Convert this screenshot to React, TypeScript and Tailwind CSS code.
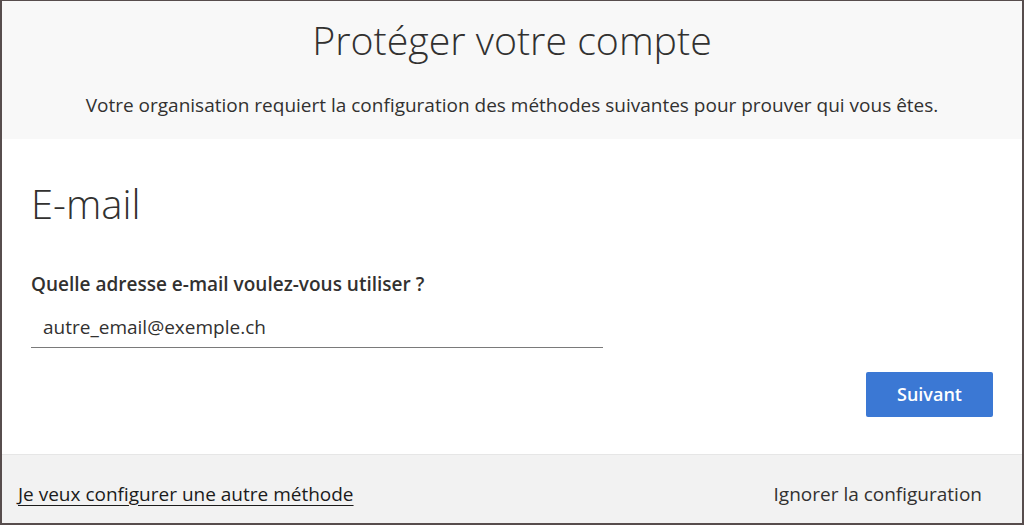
export default function App() {
  return (
    <div
      className="w-[1024px] h-[525px] flex flex-col overflow-hidden border-2 border-t border-[#574d4d] bg-white text-[#262626]"
      style={{ fontFamily: '"Open Sans", "Noto Sans", sans-serif' }}
    >
      <header className="h-[138px] shrink-0 bg-[#f8f8f8] flex flex-col items-center">
        <h1 className="mt-[14px] text-[39.3px] leading-[50px] font-light text-[#323130]">
          Protéger votre compte
        </h1>
        <p className="mt-[27px] text-[19px] leading-[26px] text-[#323130]">
          Votre organisation requiert la configuration des méthodes suivantes pour prouver qui vous êtes.
        </p>
      </header>

      <main className="flex-1 px-[29px] flex flex-col">
        <h2 className="mt-[41px] text-[40px] leading-[48px] font-light text-[#323130]">E-mail</h2>
        <label className="mt-[43px] text-[19px] leading-[26px] font-semibold text-[#323130]">
          Quelle adresse e-mail voulez-vous utiliser ?
        </label>
        <div className="mt-[17px] w-[572px] border-b border-[#7a7a7a] pl-[12px] pb-[7px]">
          <span className="block text-[19px] leading-[26px] text-[#323130]">autre_email@exemple.ch</span>
        </div>
        <div className="mt-[24px] flex justify-end">
          <button className="w-[127px] h-[45px] rounded-[2px] bg-[#3b78d4] text-white text-[18px] font-semibold">
            Suivant
          </button>
        </div>
      </main>

      <footer className="h-[69px] shrink-0 bg-[#f2f2f2] border-t border-[#e6e6e6] flex items-center justify-between pt-[9px] pl-[16px] pr-[40px]">
        <a className="text-[19px] leading-[26px] underline underline-offset-[4px] text-[#1b1b1b]">
          Je veux configurer une autre méthode
        </a>
        <span className="text-[19px] leading-[26px] text-[#323130]">Ignorer la configuration</span>
      </footer>
    </div>
  );
}
